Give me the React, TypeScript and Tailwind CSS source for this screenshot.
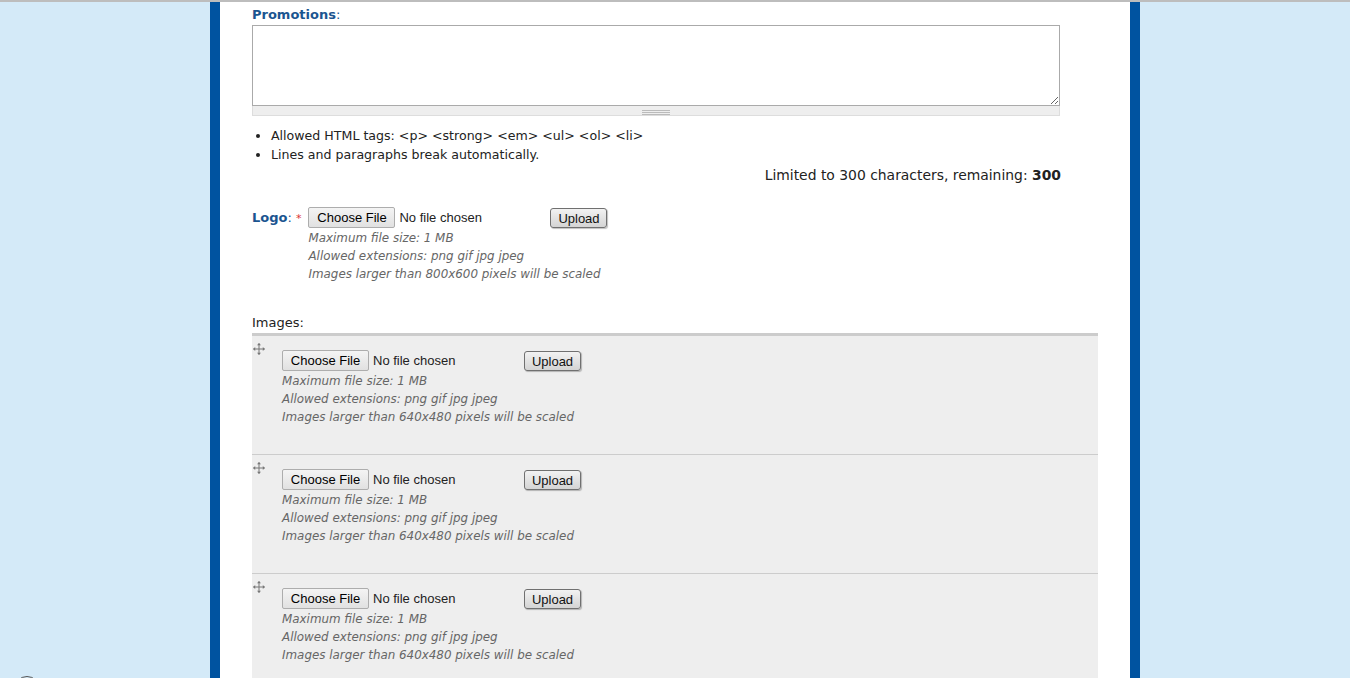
import React from 'react'

const FONT = { fontFamily: '"DejaVu Sans", Verdana, sans-serif' }

function FileWidget({ maxSize }: { maxSize: string }) {
  return (
    <div>
      <div className="flex items-center h-[21px]">
        <span className="inline-flex h-[21px] w-[87px] items-center justify-center rounded-[2px] border border-[#adadad] bg-gradient-to-b from-[#f4f4f4] to-[#e1e1e1] text-[13px] text-black font-['Liberation_Sans',Arial,sans-serif]">
          Choose File
        </span>
        <span className="ml-[4px] w-[151px] text-[13px] text-[#222] font-['Liberation_Sans',Arial,sans-serif]">No file chosen</span>
        <button className="h-[20px] w-[57px] rounded-[3px] border border-[#707070] bg-gradient-to-b from-[#f2f2f2] to-[#d4d4d4] text-[13px] text-[#111] shadow-[1px_1px_1px_rgba(0,0,0,0.25)] font-['Liberation_Sans',Arial,sans-serif]">
          Upload
        </button>
      </div>
      <div className="mt-[1px] text-[11.9px] italic leading-[18px] text-[#666]">
        <div>Maximum file size: 1 MB</div>
        <div>Allowed extensions: png gif jpg jpeg</div>
        <div>Images larger than {maxSize} pixels will be scaled</div>
      </div>
    </div>
  )
}

function DragIcon() {
  return (
    <svg width="12" height="12" viewBox="0 0 12 12" className="text-[#777]">
      <path d="M6 0.5V11.5M0.5 6H11.5" stroke="currentColor" strokeWidth="1" fill="none" />
      <path d="M6 0L4 2.2H8Z M6 12L4 9.8H8Z M0 6L2.2 4V8Z M12 6L9.8 4V8Z" fill="currentColor" />
    </svg>
  )
}

export default function App() {
  return (
    <div className="relative min-h-screen border-t-2 border-[#bdbdbd] bg-[#d4eaf8]" style={FONT}>
      <div className="mx-auto w-[930px] border-x-[10px] border-[#0053a0] bg-white px-[32px] pb-[40px] pt-[4px] text-[12.6px] text-[#222]">
        <label className="block text-[13px] font-bold leading-[17px] text-[#1b5590]">
          Promotions<span className="font-normal">:</span>
        </label>
        <div className="mt-[2px] w-[808px]">
          <textarea className="block h-[81px] w-full resize border border-[#aaa] bg-white outline-none" />
          <div className="flex h-[10px] items-center justify-center border-x border-b border-[#ddd] bg-[#eee]">
            <div className="flex w-[28px] flex-col gap-[1px] pt-[4px]">
              <div className="h-px bg-[#bbb]" />
              <div className="h-px bg-[#bbb]" />
              <div className="h-px bg-[#bbb]" />
            </div>
          </div>
        </div>

        <ul className="mt-[10px] list-disc pl-[19px] leading-[19px]">
          <li>Allowed HTML tags: &lt;p&gt; &lt;strong&gt; &lt;em&gt; &lt;ul&gt; &lt;ol&gt; &lt;li&gt;</li>
          <li>Lines and paragraphs break automatically.</li>
        </ul>
        <div className="mt-[2px] w-[809px] text-right text-[13.9px] leading-[19px]">
          Limited to 300 characters, remaining: <strong>300</strong>
        </div>

        <div className="mt-[22px] flex items-start">
          <label className="mr-[7px] mt-[1px] text-[13px] leading-[19px] text-[#1b5590]">
            <span className="font-bold">Logo</span>:{' '}
            <span className="text-[11px] text-[#d33]">*</span>
          </label>
          <FileWidget maxSize="800x600" />
        </div>

        <div className="mt-[32px] text-[13px] leading-[16px] text-[#222]">Images:</div>
        <div className="mt-[2px] border-t-[3px] border-[#ccc]">
          {[0, 1, 2].map((i) => (
            <div key={i} className="flex h-[119px] border-b border-[#ccc] bg-[#eee]">
              <div className="w-[30px] pl-[1px] pt-[7px]">
                <DragIcon />
              </div>
              <div className="pt-[14px]">
                <FileWidget maxSize="640x480" />
              </div>
            </div>
          ))}
        </div>
      </div>
      <div className="absolute left-[14px] top-[674px] h-[26px] w-[26px] rounded-full border border-[#555]" />
    </div>
  )
}
